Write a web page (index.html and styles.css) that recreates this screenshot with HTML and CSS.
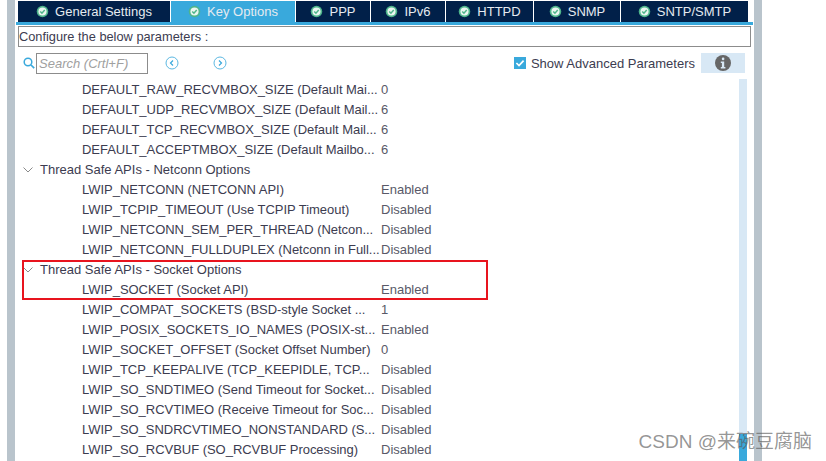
FILE: index.html
```html
<!DOCTYPE html>
<html lang="en">
<head>
<meta charset="utf-8">
<title>Key Options</title>
<link rel="stylesheet" href="styles.css">
</head>
<body>
<svg class="defs" width="0" height="0"><defs><symbol id="ok" viewBox="0 0 14 14"><circle cx="7" cy="7" r="6.2" fill="#4fb58b"/><circle cx="7" cy="7" r="4.4" fill="#eaf6f0"/><path d="M4.6 7l1.8 1.9 3-3.4" fill="none" stroke="#4fb58b" stroke-width="1.6"/></symbol></defs></svg>
<div class="app">
  <div class="rail"></div>
  <main class="panel">
    <nav class="tabs">
      <div class="tab w-general"><svg class="ok"><use href="#ok"/></svg>General Settings</div>
      <div class="tab active w-key"><svg class="ok"><use href="#ok"/></svg>Key Options</div>
      <div class="tab w-ppp"><svg class="ok"><use href="#ok"/></svg>PPP</div>
      <div class="tab w-ipv6"><svg class="ok"><use href="#ok"/></svg>IPv6</div>
      <div class="tab w-httpd"><svg class="ok"><use href="#ok"/></svg>HTTPD</div>
      <div class="tab w-snmp"><svg class="ok"><use href="#ok"/></svg>SNMP</div>
      <div class="tab w-sntp"><svg class="ok"><use href="#ok"/></svg>SNTP/SMTP</div>
    </nav>
    <div class="underline"></div>
    <div class="configure">Configure the below parameters :</div>
    <div class="toolbar">
      <svg class="mag" viewBox="0 0 12 12"><circle cx="5" cy="5" r="3.8" fill="none" stroke="#39a9dc" stroke-width="1.5"/><path d="M8 8l3.2 3.2" stroke="#39a9dc" stroke-width="1.7"/></svg>
      <div class="search">Search (Crtl+F)</div>
      <svg class="nav first" viewBox="0 0 14 14"><circle cx="7" cy="7" r="6" fill="none" stroke="#5cb8e2" stroke-width="1"/><path d="M8 4.500L5.500 7 8 9.500" fill="none" stroke="#39a9dc" stroke-width="1.2"/></svg>
      <svg class="nav second" viewBox="0 0 14 14"><circle cx="7" cy="7" r="6" fill="none" stroke="#5cb8e2" stroke-width="1"/><path d="M6 4.500L8.500 7 6 9.500" fill="none" stroke="#39a9dc" stroke-width="1.2"/></svg>
      <div class="spacer"></div>
      <div class="check"><svg viewBox="0 0 12 12"><path d="M2.400 6l2.600 2.600 4.600-5" fill="none" stroke="#fff" stroke-width="1.7"/></svg></div>
      <div class="advanced">Show Advanced Parameters</div>
      <div class="info"><svg viewBox="0 0 16 16"><circle cx="8" cy="8" r="8" fill="#666"/><rect x="6.800" y="2.600" width="2.600" height="2.600" rx="1.200" fill="#d8e8f5"/><path d="M5.800 6.600h3.400v5.400h1.200v1.400H5.800V12h1.100V8H5.800z" fill="#d8e8f5"/></svg></div>
    </div>
    <div class="body">
      <div class="list">
        <div class="row param"><span class="name">DEFAULT_RAW_RECVMBOX_SIZE (Default Mai...</span><span class="val">0</span></div>
        <div class="row param"><span class="name">DEFAULT_UDP_RECVMBOX_SIZE (Default Mail...</span><span class="val">6</span></div>
        <div class="row param"><span class="name">DEFAULT_TCP_RECVMBOX_SIZE (Default Mail...</span><span class="val">6</span></div>
        <div class="row param"><span class="name">DEFAULT_ACCEPTMBOX_SIZE (Default Mailbo...</span><span class="val">6</span></div>
        <div class="row group"><svg class="chev" viewBox="0 0 10 6"><path d="M.5.5L5 5 9.500.5" fill="none" stroke="#8a8a8a"/></svg>Thread Safe APIs - Netconn Options</div>
        <div class="row param"><span class="name">LWIP_NETCONN (NETCONN API)</span><span class="val">Enabled</span></div>
        <div class="row param"><span class="name">LWIP_TCPIP_TIMEOUT (Use TCPIP Timeout)</span><span class="val">Disabled</span></div>
        <div class="row param"><span class="name">LWIP_NETCONN_SEM_PER_THREAD (Netcon...</span><span class="val">Disabled</span></div>
        <div class="row param"><span class="name">LWIP_NETCONN_FULLDUPLEX (Netconn in Full...</span><span class="val">Disabled</span></div>
        <div class="row group"><svg class="chev" viewBox="0 0 10 6"><path d="M.5.5L5 5 9.500.5" fill="none" stroke="#8a8a8a"/></svg>Thread Safe APIs - Socket Options</div>
        <div class="row param"><span class="name">LWIP_SOCKET (Socket API)</span><span class="val">Enabled</span></div>
        <div class="row param"><span class="name">LWIP_COMPAT_SOCKETS (BSD-style Socket ...</span><span class="val">1</span></div>
        <div class="row param"><span class="name">LWIP_POSIX_SOCKETS_IO_NAMES (POSIX-st...</span><span class="val">Enabled</span></div>
        <div class="row param"><span class="name">LWIP_SOCKET_OFFSET (Socket Offset Number)</span><span class="val">0</span></div>
        <div class="row param"><span class="name">LWIP_TCP_KEEPALIVE (TCP_KEEPIDLE, TCP...</span><span class="val">Disabled</span></div>
        <div class="row param"><span class="name">LWIP_SO_SNDTIMEO (Send Timeout for Socket...</span><span class="val">Disabled</span></div>
        <div class="row param"><span class="name">LWIP_SO_RCVTIMEO (Receive Timeout for Soc...</span><span class="val">Disabled</span></div>
        <div class="row param"><span class="name">LWIP_SO_SNDRCVTIMEO_NONSTANDARD (S...</span><span class="val">Disabled</span></div>
        <div class="row param"><span class="name">LWIP_SO_RCVBUF (SO_RCVBUF Processing)</span><span class="val">Disabled</span></div>
      </div>
      <div class="scroll"><div class="thumb"></div></div>
    </div>
  </main>
  <div class="rail right"></div>
</div>
<div class="redbox"></div>
<div class="mark">CSDN @来碗豆腐脑</div>
</body>
</html>
```

FILE: styles.css
```css
* { box-sizing: border-box; }
html, body { margin: 0; height: 461px; overflow: hidden; background: #fff; }
body { font-family: "Liberation Sans", Arial, sans-serif; font-size: 13px; color: #3c3c50; position: relative; }
.defs { position: absolute; }
.app { display: flex; height: 461px; padding-left: 7px; }
.rail { width: 8px; background: #b9c4cc; flex: none; }
.rail.right { margin-left: 1px; }
.panel { width: 737px; flex: none; margin-left: 1px; display: flex; flex-direction: column; }
.tabs { display: flex; height: 21px; margin: 1px 0 0 2px; gap: 1px; }
.tab { background: #012049; color: #e6ebf0; display: flex; align-items: center; justify-content: center; gap: 6px; white-space: nowrap; }
.tab.active { background: #39a9dc; }
.ok { width: 13px; height: 13px; flex: none; }
.w-general { width: 152px; } .w-key { width: 124px; } .w-ppp { width: 74px; } .w-ipv6 { width: 74px; }
.w-httpd { width: 87px; } .w-snmp { width: 86px; } .w-sntp { width: 127px; }
.underline { height: 3px; background: #39a9dc; }
.configure { height: 21px; margin: 1px 2px 0 2px; border: 1px solid #8c8c8c; line-height: 19px; font-size: 12.8px; white-space: nowrap; }
.toolbar { height: 32px; display: flex; align-items: center; padding: 0 0 0 7px; }
.mag { width: 12px; height: 12px; flex: none; }
.search { width: 112px; height: 21px; margin-left: 1px; border: 1px solid #8c8c8c; font-style: italic; color: #a0a0a0; line-height: 19px; padding-left: 2px; font-size: 13px; }
.nav { width: 14px; height: 14px; flex: none; }
.first { margin-left: 17px; } .second { margin-left: 34px; }
.spacer { flex: 1; }
.check { width: 12px; height: 12px; background: #39a9dc; flex: none; }
.check svg { display: block; }
.advanced { margin-left: 5px; white-space: nowrap; }
.info { width: 44px; height: 20px; margin: 0 8px 0 6px; background: #d8e8f5; display: flex; align-items: center; justify-content: center; }
.info svg { width: 16px; height: 16px; }
.body { flex: 1; display: flex; min-height: 0; }
.list { flex: 1; min-width: 0; margin-top: 1px; }
.row { height: 20px; line-height: 20px; white-space: nowrap; display: flex; }
.group { padding-left: 7px; align-items: center; }
.chev { width: 10px; height: 6px; margin-right: 7px; flex: none; }
.param { padding-left: 66px; }
.name { width: 299px; flex: none; overflow: hidden; letter-spacing: -.03px; }
.val { color: #595968; }
.scroll { width: 8px; margin: 0 6px 0 0; background: #d8e8f5; display: flex; align-items: flex-end; flex: none; }
.thumb { width: 100%; height: 27px; background: #39a9dc; }
.redbox { position: absolute; left: 22px; top: 260px; width: 466px; height: 40px; border: 2px solid #e8141e; }
.mark { position: absolute; right: 14px; top: 431px; font-size: 19px; line-height: 22px; color: rgba(90,90,90,.65); font-family: "Liberation Sans", "Noto Sans CJK SC", sans-serif; white-space: nowrap; }
```
